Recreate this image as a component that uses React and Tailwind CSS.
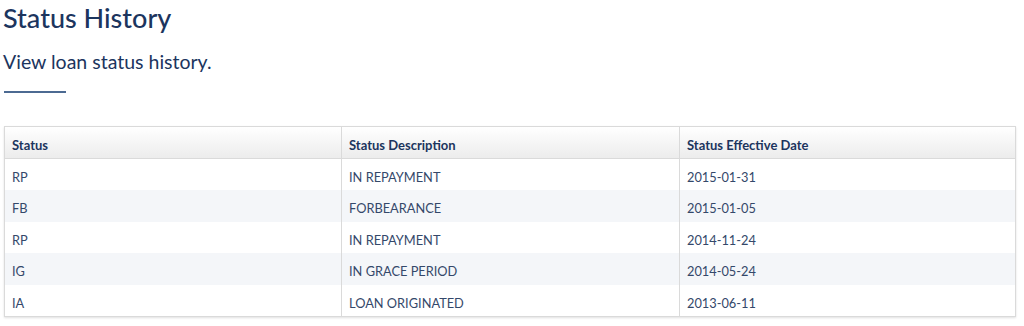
import React from "react";

const rows = [
  { status: "RP", desc: "IN REPAYMENT", date: "2015-01-31" },
  { status: "FB", desc: "FORBEARANCE", date: "2015-01-05" },
  { status: "RP", desc: "IN REPAYMENT", date: "2014-11-24" },
  { status: "IG", desc: "IN GRACE PERIOD", date: "2014-05-24" },
  { status: "IA", desc: "LOAN ORIGINATED", date: "2013-06-11" },
];

export default function App() {
  return (
    <div className="bg-white w-[1024px] h-[326px] px-[4px] text-[#1d3557] font-['Lato',sans-serif]">
      <h1 className="text-[27px] leading-[34px] pt-[1px] -ml-[1px] font-medium text-[#1c355e]">Status History</h1>
      <p className="text-[19.5px] leading-[26px] mt-[14px] -ml-[1px] text-[#1c355e]">View loan status history.</p>
      <div className="w-[62px] h-[2px] bg-[#4c6a92] mt-[16px]" />

      {/* table */}
      <table className="mt-[33px] w-[1012px] border border-[#dadada] border-collapse table-fixed shadow-[0_1px_2px_rgba(0,0,0,0.12)]">
        <thead>
          <tr className="h-[32px] bg-gradient-to-b from-white to-[#ececec] border-b border-[#dadada] text-[#1c355e]">
            <th className="w-[337px] text-left text-[13px] font-bold px-[7px] pt-[6px] pb-0 border-r border-[#dadada]">Status</th>
            <th className="w-[338px] text-left text-[13px] font-bold px-[7px] pt-[6px] pb-0 border-r border-[#dadada]">Status Description</th>
            <th className="text-left text-[13px] font-bold px-[7px] pt-[6px] pb-0">Status Effective Date</th>
          </tr>
        </thead>
        <tbody>
          {rows.map((r, i) => (
            <tr key={i} className={`h-[31.6px] text-[12.8px] text-[#34486a] ${i % 2 === 1 ? "bg-[#f4f6f9]" : "bg-white"}`}>
              <td className="px-[7px] pt-[6px] border-r border-[#dadada]">{r.status}</td>
              <td className="px-[7px] pt-[6px] border-r border-[#dadada]">{r.desc}</td>
              <td className="px-[7px] pt-[6px]">{r.date}</td>
            </tr>
          ))}
        </tbody>
      </table>
    </div>
  );
}
